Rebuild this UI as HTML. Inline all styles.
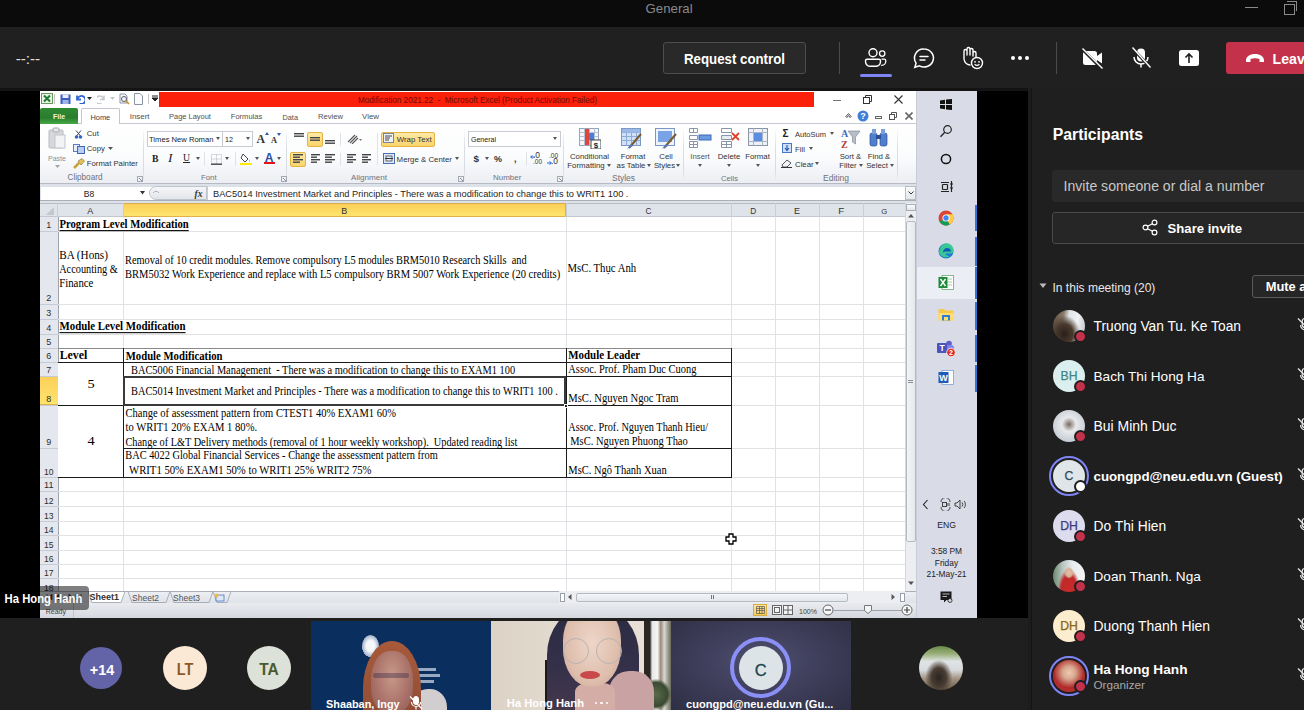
<!DOCTYPE html><html><head><meta charset="utf-8"><style>
*{margin:0;padding:0;box-sizing:border-box}
html,body{width:1304px;height:710px;overflow:hidden;background:#000;font-family:"Liberation Sans",sans-serif}
.a{position:absolute}
.t{white-space:pre;line-height:1}
</style></head><body>
<div class="a" style="left:0px;top:0px;width:1304px;height:27px;background:#0b0b0b"></div>
<div class="a t" style="left:645.6px;top:2.22px;font-family:'Liberation Sans';font-weight:normal;font-size:13.21px;color:#8a8a8a">General</div>
<div class="a" style="left:1245px;top:7px;width:13px;height:1px;background:#8a8a8a"></div>
<div class="a" style="left:1284px;top:4px;width:11px;height:11px;border:1px solid #8a8a8a"></div>
<div class="a" style="left:1287px;top:1px;width:10px;height:10px;border-top:1px solid #8a8a8a;border-right:1px solid #8a8a8a"></div>
<div class="a" style="left:0px;top:27px;width:1304px;height:61px;background:#202020"></div>
<div class="a t" style="left:15.7px;top:50.62px;font-family:'Liberation Sans';font-weight:normal;font-size:15.22px;color:#e0e0e0">--:--</div>
<div class="a" style="left:663px;top:42px;width:143px;height:32px;border:1px solid #4d4d4d;border-radius:3px;background:#292929"></div>
<div class="a t" style="left:684px;top:52.57px;font-family:'Liberation Sans';font-weight:bold;font-size:13.27px;transform:scaleY(1.138);transform-origin:0 11.23px;color:#fff">Request control</div>
<div class="a" style="left:839px;top:42px;width:1px;height:32px;background:#4b4b4b"></div>
<div class="a" style="left:1056px;top:42px;width:1px;height:32px;background:#4b4b4b"></div>
<svg class="a" style="left:864px;top:46px;" width="26" height="24" viewBox="0 0 26 24"><circle cx="9" cy="6.8" r="4" fill="none" stroke="#fff" stroke-width="1.4"/><path d="M3 13.2 h12 a1.5 1.5 0 0 1 1.5 1.5 v0.8 a4.8 4.8 0 0 1 -4.8 4.8 h-5.4 a4.8 4.8 0 0 1 -4.8 -4.8 v-0.8 a1.5 1.5 0 0 1 1.5 -1.5z" fill="none" stroke="#fff" stroke-width="1.4"/><circle cx="18.2" cy="7.6" r="2.7" fill="none" stroke="#fff" stroke-width="1.3"/><path d="M17.5 13.2 h2.8 a1.5 1.5 0 0 1 1.5 1.5 v0.6 a4 4 0 0 1 -4 4 h-0.6" fill="none" stroke="#fff" stroke-width="1.3"/></svg>
<div class="a" style="left:860px;top:74px;width:32px;height:3px;background:#7f85f5;border-radius:2px"></div>
<svg class="a" style="left:912px;top:47px;" width="24" height="22" viewBox="0 0 24 22"><path d="M12 2 a9.5 9 0 1 1 -4.6 16.9 l-4.6 1.4 1.3-4.2 a9 9 0 0 1 7.9-14.1z" fill="none" stroke="#fff" stroke-width="1.5"/><path d="M8 9.5h8M8 13h5" stroke="#fff" stroke-width="1.5" stroke-linecap="round"/></svg>
<svg class="a" style="left:960px;top:46px;" width="24" height="24" viewBox="0 0 24 24"><path d="M4 13 V5 a1.5 1.5 0 0 1 3 0 V9 M7 9 V3 a1.5 1.5 0 0 1 3 0 V9 M10 9 V4 a1.5 1.5 0 0 1 3 0 v6 M13 10 V7 a1.5 1.5 0 0 1 3 0 v4 M4 13 a7 7 0 0 0 6 6" fill="none" stroke="#fff" stroke-width="1.4" stroke-linecap="round"/><circle cx="17" cy="17" r="5.5" fill="#202020" stroke="#fff" stroke-width="1.4"/><circle cx="15" cy="15.8" r="0.9" fill="#fff"/><circle cx="19" cy="15.8" r="0.9" fill="#fff"/><path d="M14.6 18.3 q2.4 2.2 4.8 0" fill="none" stroke="#fff" stroke-width="1.2"/></svg>
<div class="a" style="left:1011px;top:56px;width:4px;height:4px;background:#fff;border-radius:50%"></div>
<div class="a" style="left:1018px;top:56px;width:4px;height:4px;background:#fff;border-radius:50%"></div>
<div class="a" style="left:1025px;top:56px;width:4px;height:4px;background:#fff;border-radius:50%"></div>
<svg class="a" style="left:1080px;top:46px;" width="26" height="24" viewBox="0 0 26 24"><rect x="3" y="5" width="14" height="14" rx="2.5" fill="#fff"/><path d="M17 10 l5-3.5 v11 l-5-3.5z" fill="#fff"/><path d="M2 3 L22 23" stroke="#202020" stroke-width="3"/><path d="M2.5 2.5 L22.5 22.5" stroke="#fff" stroke-width="1.4"/></svg>
<svg class="a" style="left:1129px;top:46px;" width="24" height="24" viewBox="0 0 24 24"><rect x="8" y="2.5" width="8" height="13" rx="4" fill="#fff"/><path d="M5 11 a7 7 0 0 0 14 0" fill="none" stroke="#fff" stroke-width="1.5"/><path d="M12 18 v3.5" stroke="#fff" stroke-width="1.5"/><path d="M3 2 L21 21" stroke="#202020" stroke-width="3"/><path d="M3.5 1.5 L21.5 21.5" stroke="#fff" stroke-width="1.4"/></svg>
<svg class="a" style="left:1178px;top:48px;" width="22" height="20" viewBox="0 0 22 20"><rect x="1" y="2" width="20" height="16" rx="2.5" fill="#fff"/><path d="M11 15 V6 M7.5 9.5 L11 6 L14.5 9.5" fill="none" stroke="#202020" stroke-width="1.6"/></svg>
<div class="a" style="left:1226px;top:42px;width:90px;height:32px;background:#c4314b;border-radius:3px"></div>
<svg class="a" style="left:1244px;top:50px;" width="22" height="16" viewBox="0 0 22 16"><path d="M2 10.5 c0-4 4-6.5 9-6.5 s9 2.5 9 6.5 v1.5 h-4.5 v-3 c-2.5-1 -6.5-1 -9 0 v3 H2z" fill="#fff"/></svg>
<div class="a t" style="left:1272.6px;top:51.86px;font-family:'Liberation Sans';font-weight:bold;font-size:14.11px;transform:scaleY(1.0987);transform-origin:0 11.94px;color:#fff">Leave</div>
<div class="a" style="left:0px;top:88px;width:1028px;height:530px;background:#000"></div>
<div class="a" style="left:0px;top:88px;width:1028px;height:3px;background:#141414"></div>
<div class="a" style="left:1028px;top:88px;width:276px;height:622px;background:#1f1f1f"></div>
<div class="a" style="left:1028px;top:88px;width:3px;height:622px;background:#1c1c1c"></div>
<div class="a" style="left:1031px;top:88px;width:1px;height:622px;background:#141414"></div>
<div class="a" style="left:0px;top:618px;width:1028px;height:92px;background:#1f1f1f"></div>
<div class="a" style="left:40px;top:91px;width:877px;height:527px;background:#fff"></div>
<svg class="a" style="left:41px;top:93px;" width="12" height="11" viewBox="0 0 12 11"><rect x="0.5" y="0.5" width="11" height="10" fill="#e9f3e6" stroke="#6a9a60"/><path d="M3 2.5 L9 8.5 M9 2.5 L3 8.5" stroke="#1e7b32" stroke-width="2"/></svg>
<div class="a" style="left:54px;top:94px;width:1px;height:10px;background:#c8c8c8"></div>
<svg class="a" style="left:60px;top:94px;" width="11" height="10" viewBox="0 0 11 10"><rect x="0.5" y="0.5" width="10" height="9.5" fill="#3d5fc0"/><rect x="2.5" y="0.5" width="6" height="3.5" fill="#e8eefc"/><rect x="2.5" y="6" width="6" height="4" fill="#9fb3e6"/></svg>
<svg class="a" style="left:75px;top:94px;" width="10" height="10" viewBox="0 0 10 10"><path d="M2 1.5 V5.5 H6" fill="none" stroke="#2f64d0" stroke-width="1.8"/><path d="M2.5 5 A4 4 0 1 1 4.5 9.5" fill="none" stroke="#2f64d0" stroke-width="1.8"/></svg>
<svg class="a" style="left:87px;top:97px;" width="5" height="4" viewBox="0 0 5 4"><path d="M0 0 H5 L2.5 3z" fill="#222"/></svg>
<svg class="a" style="left:97px;top:94px;" width="9" height="10" viewBox="0 0 9 10"><path d="M7 1.5 V5.5 H3" fill="none" stroke="#c2c6cc" stroke-width="1.5"/><path d="M6.5 5 A4 4 0 1 0 4.5 9.5" fill="none" stroke="#c2c6cc" stroke-width="1.5"/></svg>
<svg class="a" style="left:110px;top:97px;" width="5" height="4" viewBox="0 0 5 4"><path d="M0 0 H5 L2.5 3z" fill="#c2c6cc"/></svg>
<svg class="a" style="left:119px;top:93px;" width="11" height="12" viewBox="0 0 11 12"><path d="M1 1 H6 L8 3 V10 H1z" fill="#f4f6fa" stroke="#8d95a4"/><circle cx="5" cy="6" r="2.5" fill="none" stroke="#57606e" stroke-width="1"/><path d="M7 8 L10 11" stroke="#d08a2a" stroke-width="1.6"/></svg>
<svg class="a" style="left:134px;top:93px;" width="9" height="12" viewBox="0 0 9 12"><path d="M0.5 0.5 H6 L8.5 3 V11.5 H0.5z" fill="#fafbfd" stroke="#8d95a4"/></svg>
<div class="a" style="left:148px;top:94px;width:1px;height:10px;background:#c8c8c8"></div>
<svg class="a" style="left:152px;top:95px;" width="6" height="8" viewBox="0 0 6 8"><path d="M0 1 H6 M0 3 H6 L3 6z" stroke="#222" fill="#222" stroke-width="1"/></svg>
<div class="a" style="left:159px;top:92px;width:655px;height:15px;background:#fb2009"></div>
<div class="a t" style="left:358px;top:96.82px;font-family:'Liberation Sans';font-weight:normal;font-size:8.13px;color:#6d0b05">Modification 2021.22  -  Microsoft Excel (Product Activation Failed)</div>
<div class="a" style="left:833px;top:100px;width:8px;height:1px;background:#777"></div>
<svg class="a" style="left:863px;top:95px;" width="9" height="9" viewBox="0 0 9 9"><rect x="0.5" y="2.5" width="6" height="6" fill="none" stroke="#333"/><path d="M2.5 2.5 V0.5 H8.5 V6.5 H6.5" fill="none" stroke="#333"/></svg>
<svg class="a" style="left:894px;top:95px;" width="9" height="9" viewBox="0 0 9 9"><path d="M0.5 0.5 L8.5 8.5 M8.5 0.5 L0.5 8.5" stroke="#333" stroke-width="1.1"/></svg>
<div class="a" style="left:40px;top:123px;width:877px;height:1px;background:#c6cad1"></div>
<div class="a" style="left:40px;top:108px;width:38px;height:16.2px;background:linear-gradient(#2f8a34,#2a7d2e 60%,#45a845);border-radius:2px 2px 0 0"></div>
<div class="a t" style="left:53px;top:113.9px;font-family:'Liberation Sans';font-weight:bold;font-size:6.97px;color:#eaf6e8">File</div>
<div class="a" style="left:81px;top:108px;width:39px;height:16px;background:#fff;border:1px solid #c3c7cf;border-bottom:none;border-radius:2px 2px 0 0"></div>
<div class="a t" style="left:90.5px;top:113.55px;font-family:'Liberation Sans';font-weight:normal;font-size:7.39px;color:#3c3c3c">Home</div>
<div class="a t" style="left:129.7px;top:113.06px;font-family:'Liberation Sans';font-weight:normal;font-size:7.96px;color:#505050">Insert</div>
<div class="a t" style="left:169px;top:113.47px;font-family:'Liberation Sans';font-weight:normal;font-size:7.48px;color:#505050">Page Layout</div>
<div class="a t" style="left:230.8px;top:113.4px;font-family:'Liberation Sans';font-weight:normal;font-size:7.56px;color:#505050">Formulas</div>
<div class="a t" style="left:282.5px;top:113.59px;font-family:'Liberation Sans';font-weight:normal;font-size:7.34px;color:#505050">Data</div>
<div class="a t" style="left:318px;top:113.35px;font-family:'Liberation Sans';font-weight:normal;font-size:7.62px;color:#505050">Review</div>
<div class="a t" style="left:362px;top:113.11px;font-family:'Liberation Sans';font-weight:normal;font-size:7.91px;color:#505050">View</div>
<svg class="a" style="left:845px;top:112px;" width="7" height="6" viewBox="0 0 7 6"><path d="M0.5 5 L3.5 1.5 L6.5 5 M1.5 6 L3.5 3.5 L5.5 6" fill="none" stroke="#555"/></svg>
<svg class="a" style="left:857px;top:110px;" width="12" height="12" viewBox="0 0 12 12"><circle cx="6" cy="6" r="5.5" fill="#3f7fd6"/><text x="6" y="9.3" font-size="9" font-weight="bold" fill="#fff" text-anchor="middle" font-family="Liberation Sans">?</text></svg>
<div class="a" style="left:875px;top:116px;width:7px;height:3px;border:1px solid #666"></div>
<svg class="a" style="left:889px;top:112px;" width="8" height="8" viewBox="0 0 8 8"><rect x="0.5" y="2.5" width="5" height="5" fill="none" stroke="#555"/><path d="M2.5 2.5V0.5H7.5V5.5H5.5" fill="none" stroke="#555"/></svg>
<svg class="a" style="left:905px;top:112px;" width="8" height="8" viewBox="0 0 8 8"><path d="M0.5 0.5 L7.5 7.5 M7.5 0.5 L0.5 7.5" stroke="#666" stroke-width="1.6"/></svg>
<div class="a" style="left:40px;top:124px;width:877px;height:59px;background:linear-gradient(#ffffff 0%,#fbfcfd 55%,#eceef3 100%)"></div>
<div class="a" style="left:40px;top:183px;width:877px;height:1px;background:#b6bac2"></div>
<div class="a" style="left:143px;top:127px;width:1px;height:54px;background:linear-gradient(#fff,#d9dce2 40%,#d9dce2 80%,#eceef2)"></div>
<div class="a" style="left:286px;top:127px;width:1px;height:54px;background:linear-gradient(#fff,#d9dce2 40%,#d9dce2 80%,#eceef2)"></div>
<div class="a" style="left:464px;top:127px;width:1px;height:54px;background:linear-gradient(#fff,#d9dce2 40%,#d9dce2 80%,#eceef2)"></div>
<div class="a" style="left:563px;top:127px;width:1px;height:54px;background:linear-gradient(#fff,#d9dce2 40%,#d9dce2 80%,#eceef2)"></div>
<div class="a" style="left:683px;top:127px;width:1px;height:54px;background:linear-gradient(#fff,#d9dce2 40%,#d9dce2 80%,#eceef2)"></div>
<div class="a" style="left:775px;top:127px;width:1px;height:54px;background:linear-gradient(#fff,#d9dce2 40%,#d9dce2 80%,#eceef2)"></div>
<div class="a" style="left:897px;top:127px;width:1px;height:54px;background:linear-gradient(#fff,#d9dce2 40%,#d9dce2 80%,#eceef2)"></div>
<div class="a t" style="left:67.5px;top:174.08px;font-family:'Liberation Sans';font-weight:normal;font-size:8.18px;color:#6f737b">Clipboard</div>
<div class="a t" style="left:201px;top:174.4px;font-family:'Liberation Sans';font-weight:normal;font-size:7.80px;color:#6f737b">Font</div>
<div class="a t" style="left:351px;top:174.15px;font-family:'Liberation Sans';font-weight:normal;font-size:8.10px;color:#6f737b">Alignment</div>
<div class="a t" style="left:493px;top:174.24px;font-family:'Liberation Sans';font-weight:normal;font-size:7.98px;color:#6f737b">Number</div>
<div class="a t" style="left:612px;top:173.85px;font-family:'Liberation Sans';font-weight:normal;font-size:8.45px;color:#6f737b">Styles</div>
<div class="a t" style="left:721px;top:174.53px;font-family:'Liberation Sans';font-weight:normal;font-size:7.65px;color:#6f737b">Cells</div>
<div class="a t" style="left:823px;top:173.8px;font-family:'Liberation Sans';font-weight:normal;font-size:8.50px;color:#6f737b">Editing</div>
<svg class="a" style="left:137px;top:176px;" width="6" height="6" viewBox="0 0 6 6"><rect x="0.5" y="0.5" width="5" height="5" fill="none" stroke="#a4a8b0"/><path d="M2 2 L5 5" stroke="#8a8e96"/></svg>
<svg class="a" style="left:281px;top:176px;" width="6" height="6" viewBox="0 0 6 6"><rect x="0.5" y="0.5" width="5" height="5" fill="none" stroke="#a4a8b0"/><path d="M2 2 L5 5" stroke="#8a8e96"/></svg>
<svg class="a" style="left:458px;top:176px;" width="6" height="6" viewBox="0 0 6 6"><rect x="0.5" y="0.5" width="5" height="5" fill="none" stroke="#a4a8b0"/><path d="M2 2 L5 5" stroke="#8a8e96"/></svg>
<svg class="a" style="left:557px;top:176px;" width="6" height="6" viewBox="0 0 6 6"><rect x="0.5" y="0.5" width="5" height="5" fill="none" stroke="#a4a8b0"/><path d="M2 2 L5 5" stroke="#8a8e96"/></svg>
<svg class="a" style="left:48px;top:127px;" width="18" height="22" viewBox="0 0 18 22"><rect x="1" y="3" width="14" height="18" rx="1" fill="#d5d7db" stroke="#b9bcc2"/><rect x="5" y="1" width="6" height="4" rx="1" fill="#e6e7ea" stroke="#a8abb1"/><rect x="7" y="8" width="10" height="13" fill="#f2f3f5" stroke="#c2c5ca"/></svg>
<div class="a t" style="left:48px;top:155.04px;font-family:'Liberation Sans';font-weight:normal;font-size:7.04px;color:#8c9098">Paste</div>
<svg class="a" style="left:55px;top:165px;" width="5" height="3" viewBox="0 0 5 3"><path d="M0 0H5L2.5 3z" fill="#a0a4aa"/></svg>
<svg class="a" style="left:74px;top:130px;" width="9" height="9" viewBox="0 0 9 9"><path d="M2 0.5 L6.5 6 M7 0.5 L2.5 6" stroke="#445" stroke-width="1"/><circle cx="2.5" cy="7" r="1.8" fill="#3468c8"/><circle cx="6.5" cy="7" r="1.8" fill="#3468c8"/></svg>
<div class="a t" style="left:86.8px;top:130.47px;font-family:'Liberation Sans';font-weight:normal;font-size:7.71px;color:#333">Cut</div>
<svg class="a" style="left:73px;top:144px;" width="12" height="10" viewBox="0 0 12 10"><rect x="0.5" y="0.5" width="6" height="7" fill="#e8eefb" stroke="#5b7cc4"/><rect x="4.5" y="2.5" width="7" height="7" fill="#b8cdf2" stroke="#3f66bd"/></svg>
<div class="a t" style="left:86.8px;top:145.47px;font-family:'Liberation Sans';font-weight:normal;font-size:7.71px;color:#333">Copy</div>
<svg class="a" style="left:108px;top:147px;" width="5" height="3" viewBox="0 0 5 3"><path d="M0 0H5L2.5 3z" fill="#555"/></svg>
<svg class="a" style="left:73px;top:158px;" width="12" height="11" viewBox="0 0 12 11"><path d="M1 10 L6 5" stroke="#c9a23a" stroke-width="2.5"/><path d="M5 3 L9 0.5 L11.5 3 L8 7z" fill="#e3c25a" stroke="#7a6a3a" stroke-width="0.6"/></svg>
<div class="a t" style="left:86.8px;top:160.45px;font-family:'Liberation Sans';font-weight:normal;font-size:7.74px;color:#333">Format Painter</div>
<div class="a" style="left:147px;top:131px;width:76px;height:16px;background:#fff;border:1px solid #c7cbd2"></div>
<div class="a" style="left:222px;top:131px;width:31px;height:16px;background:#fff;border:1px solid #c7cbd2"></div>
<div class="a t" style="left:149px;top:135.56px;font-family:'Liberation Sans';font-weight:normal;font-size:7.61px;color:#222">Times New Roman</div>
<svg class="a" style="left:216px;top:137px;" width="4" height="3" viewBox="0 0 4 3"><path d="M0 0H4L2 3z" fill="#555"/></svg>
<div class="a t" style="left:225px;top:135.91px;font-family:'Liberation Sans';font-weight:normal;font-size:7.19px;color:#222">12</div>
<svg class="a" style="left:246px;top:137px;" width="4" height="3" viewBox="0 0 4 3"><path d="M0 0H4L2 3z" fill="#555"/></svg>
<div class="a t" style="left:256.5px;top:133.64px;font-family:'Liberation Serif';font-weight:bold;font-size:11.77px;color:#333">A</div>
<svg class="a" style="left:265px;top:132px;" width="4" height="3" viewBox="0 0 4 3"><path d="M0 3H4L2 0z" fill="#2b5cb8"/></svg>
<div class="a t" style="left:271px;top:136.54px;font-family:'Liberation Serif';font-weight:bold;font-size:8.31px;color:#333">A</div>
<svg class="a" style="left:277px;top:133px;" width="4" height="3" viewBox="0 0 4 3"><path d="M0 0H4L2 3z" fill="#2b5cb8"/></svg>
<div class="a t" style="left:152px;top:154.34px;font-family:'Liberation Serif';font-weight:bold;font-size:9.74px;color:#222">B</div>
<div class="a t" style="left:168px;top:151.19px;font-family:'Liberation Serif';font-weight:normal;font-style:italic;font-size:13.51px;color:#222">I</div>
<div class="a t" style="left:183px;top:153.38px;font-family:'Liberation Serif';font-weight:normal;font-size:9.69px;color:#222;text-decoration:underline">U</div>
<svg class="a" style="left:196px;top:157px;" width="4" height="3" viewBox="0 0 4 3"><path d="M0 0H4L2 3z" fill="#555"/></svg>
<div class="a" style="left:204px;top:152px;width:1px;height:14px;background:#dfe2e7"></div>
<svg class="a" style="left:211px;top:154px;" width="11" height="11" viewBox="0 0 11 11"><rect x="0.5" y="0.5" width="10" height="9" fill="none" stroke="#b0b5bd" stroke-dasharray="1 1"/><path d="M5.5 0.5V9.5M0.5 5H10.5" stroke="#b0b5bd" stroke-dasharray="1 1"/><path d="M0 10.2H11" stroke="#222" stroke-width="1.1"/></svg>
<svg class="a" style="left:225px;top:157px;" width="4" height="3" viewBox="0 0 4 3"><path d="M0 0H4L2 3z" fill="#555"/></svg>
<div class="a" style="left:235px;top:152px;width:1px;height:14px;background:#dfe2e7"></div>
<svg class="a" style="left:240px;top:152px;" width="12" height="13" viewBox="0 0 12 13"><path d="M3 2 L8 7 L5 10 L1 6z" fill="#fff" stroke="#445"/><path d="M9 7 q1.5 2 0 3" fill="#6aa0e0"/><rect x="0" y="11" width="12" height="2" fill="#ffea00"/></svg>
<svg class="a" style="left:255px;top:157px;" width="4" height="3" viewBox="0 0 4 3"><path d="M0 0H4L2 3z" fill="#555"/></svg>
<div class="a t" style="left:264.8px;top:151.5px;font-family:'Liberation Sans';font-weight:bold;font-size:12.05px;color:#2a4fa8">A</div>
<div class="a" style="left:263.5px;top:162px;width:11px;height:2.2px;background:#e0161a"></div>
<svg class="a" style="left:277px;top:157px;" width="4" height="3" viewBox="0 0 4 3"><path d="M0 0H4L2 3z" fill="#555"/></svg>
<svg class="a" style="left:294px;top:133px;" width="12" height="7.0" viewBox="0 0 12 7.0"><rect x="0" y="0.0" width="10" height="1.4" fill="#444"/><rect x="0" y="2.5" width="10" height="1.4" fill="#444"/></svg>
<div class="a" style="left:306.5px;top:131.5px;width:16px;height:15px;background:linear-gradient(#fde9a6,#fbd46c);border:1px solid #e2b543;border-radius:2px"></div>
<svg class="a" style="left:309.5px;top:137px;" width="12" height="7.0" viewBox="0 0 12 7.0"><rect x="0" y="0.0" width="10" height="1.4" fill="#444"/><rect x="0" y="2.5" width="10" height="1.4" fill="#444"/></svg>
<svg class="a" style="left:325px;top:139.5px;" width="12" height="7.0" viewBox="0 0 12 7.0"><rect x="0" y="0.0" width="10" height="1.4" fill="#444"/><rect x="0" y="2.5" width="10" height="1.4" fill="#444"/></svg>
<div class="a" style="left:340px;top:133px;width:1px;height:13px;background:#dfe2e7"></div>
<svg class="a" style="left:347px;top:133px;" width="16" height="11" viewBox="0 0 16 11"><path d="M1 9 L8 2 M3 10 L10 3 M5 11 L11 5" stroke="#555" stroke-width="1.1"/><path d="M12 6 L15 6 L13.5 8z" fill="#777"/></svg>
<div class="a" style="left:377px;top:133px;width:1px;height:32px;background:#dfe2e7"></div>
<div class="a" style="left:381px;top:131.5px;width:54px;height:15px;background:linear-gradient(#fde9a6,#fbd46c);border:1px solid #e2b543;border-radius:2px"></div>
<svg class="a" style="left:383px;top:133px;" width="12" height="11" viewBox="0 0 12 11"><rect x="0.5" y="0.5" width="10" height="9" fill="#eef1f6" stroke="#7a8494"/><path d="M2 3H9M2 5H7M2 7H6" stroke="#444"/></svg>
<div class="a t" style="left:396.7px;top:135.86px;font-family:'Liberation Sans';font-weight:normal;font-size:7.84px;color:#333">Wrap Text</div>
<div class="a" style="left:290px;top:151.5px;width:16px;height:15px;background:linear-gradient(#fde9a6,#fbd46c);border:1px solid #e2b543;border-radius:2px"></div>
<svg class="a" style="left:293px;top:154px;" width="12" height="12.0" viewBox="0 0 12 12.0"><rect x="0" y="0.0" width="10" height="1.4" fill="#444"/><rect x="0" y="2.5" width="7" height="1.4" fill="#444"/><rect x="0" y="5.0" width="10" height="1.4" fill="#444"/><rect x="0" y="7.5" width="7" height="1.4" fill="#444"/></svg>
<svg class="a" style="left:311px;top:154px;" width="12" height="12.0" viewBox="0 0 12 12.0"><rect x="0" y="0.0" width="9" height="1.4" fill="#444"/><rect x="0" y="2.5" width="6" height="1.4" fill="#444"/><rect x="0" y="5.0" width="9" height="1.4" fill="#444"/><rect x="0" y="7.5" width="6" height="1.4" fill="#444"/></svg>
<svg class="a" style="left:325px;top:154px;" width="12" height="12.0" viewBox="0 0 12 12.0"><rect x="0" y="0.0" width="10" height="1.4" fill="#444"/><rect x="0" y="2.5" width="7" height="1.4" fill="#444"/><rect x="0" y="5.0" width="10" height="1.4" fill="#444"/><rect x="0" y="7.5" width="7" height="1.4" fill="#444"/></svg>
<div class="a" style="left:340px;top:153px;width:1px;height:13px;background:#dfe2e7"></div>
<svg class="a" style="left:347px;top:154px;" width="12" height="12.0" viewBox="0 0 12 12.0"><rect x="0" y="0.0" width="9" height="1.4" fill="#444"/><rect x="0" y="2.5" width="6" height="1.4" fill="#444"/><rect x="0" y="5.0" width="9" height="1.4" fill="#444"/><rect x="0" y="7.5" width="6" height="1.4" fill="#444"/></svg>
<svg class="a" style="left:362px;top:154px;" width="12" height="12.0" viewBox="0 0 12 12.0"><rect x="0" y="0.0" width="9" height="1.4" fill="#444"/><rect x="0" y="2.5" width="6" height="1.4" fill="#444"/><rect x="0" y="5.0" width="9" height="1.4" fill="#444"/><rect x="0" y="7.5" width="6" height="1.4" fill="#444"/></svg>
<svg class="a" style="left:383px;top:153px;" width="12" height="11" viewBox="0 0 12 11"><rect x="0.5" y="0.5" width="11" height="10" fill="#dfe8f6" stroke="#4a6fb5"/><path d="M2 5.5H10" stroke="#333"/><rect x="3" y="3" width="6" height="5" fill="none" stroke="#333" stroke-width="0.7"/></svg>
<div class="a t" style="left:396.6px;top:155.86px;font-family:'Liberation Sans';font-weight:normal;font-size:7.85px;color:#333">Merge &amp; Center</div>
<svg class="a" style="left:455px;top:157px;" width="4" height="3" viewBox="0 0 4 3"><path d="M0 0H4L2 3z" fill="#555"/></svg>
<div class="a" style="left:468px;top:131px;width:93px;height:16px;background:#fff;border:1px solid #c7cbd2"></div>
<div class="a t" style="left:471px;top:136.05px;font-family:'Liberation Sans';font-weight:normal;font-size:7.03px;color:#222">General</div>
<svg class="a" style="left:553px;top:137px;" width="4" height="3" viewBox="0 0 4 3"><path d="M0 0H4L2 3z" fill="#555"/></svg>
<div class="a t" style="left:473.5px;top:154.13px;font-family:'Liberation Sans';font-weight:bold;font-size:9.89px;color:#333">$</div>
<svg class="a" style="left:485px;top:157px;" width="4" height="3" viewBox="0 0 4 3"><path d="M0 0H4L2 3z" fill="#555"/></svg>
<div class="a t" style="left:494px;top:154.88px;font-family:'Liberation Sans';font-weight:bold;font-size:9.00px;color:#333">%</div>
<div class="a t" style="left:514px;top:154.89px;font-family:'Liberation Sans';font-weight:bold;font-size:8.99px;color:#333">,</div>
<div class="a" style="left:526px;top:152px;width:1px;height:14px;background:#dfe2e7"></div>
<div class="a t" style="left:533px;top:151.4px;font-family:'Liberation Sans';font-weight:normal;font-size:8.39px;color:#333">.0</div>
<div class="a t" style="left:533px;top:159.02px;font-family:'Liberation Sans';font-weight:normal;font-size:6.47px;color:#333">.00</div>
<div class="a t" style="left:549px;top:153.02px;font-family:'Liberation Sans';font-weight:normal;font-size:6.47px;color:#333">.00</div>
<div class="a t" style="left:551px;top:157.4px;font-family:'Liberation Sans';font-weight:normal;font-size:8.39px;color:#333">.0</div>
<svg class="a" style="left:530px;top:155px;" width="5" height="4" viewBox="0 0 5 4"><path d="M5 2H1M2.5 0.5L0.5 2L2.5 3.5" stroke="#2b6ad0" fill="none"/></svg>
<svg class="a" style="left:547px;top:161px;" width="5" height="4" viewBox="0 0 5 4"><path d="M0 2H4M2.5 0.5L4.5 2L2.5 3.5" stroke="#2b6ad0" fill="none"/></svg>
<svg class="a" style="left:579px;top:128px;" width="22" height="21" viewBox="0 0 22 21"><rect x="0.5" y="0.5" width="19" height="17" fill="#f5f7fb" stroke="#94a2bb"/><path d="M0.5 4.5H19.5M0.5 8.5H19.5M0.5 12.5H19.5M5.5 0.5V17.5M10.5 0.5V17.5M15.5 0.5V17.5" stroke="#b4c0d4"/><rect x="6" y="1" width="4" height="16" fill="#e0453a"/><rect x="10" y="5" width="5" height="7" fill="#4b7fd6"/><rect x="12" y="12" width="10" height="9" fill="#fff" stroke="#444"/><text x="17" y="20" font-size="8" font-family="Liberation Sans" font-weight="bold" fill="#222" text-anchor="middle">$</text></svg>
<div class="a t" style="left:529.5px;width:120px;text-align:center;top:153.4px;font-family:'Liberation Sans';font-size:7.8px;font-weight:normal;color:#333;">Conditional</div>
<div class="a t" style="left:526px;width:120px;text-align:center;top:162.4px;font-family:'Liberation Sans';font-size:7.8px;font-weight:normal;color:#333;">Formatting</div>
<svg class="a" style="left:607px;top:164px;" width="4" height="3" viewBox="0 0 4 3"><path d="M0 0H4L2 3z" fill="#555"/></svg>
<svg class="a" style="left:621px;top:128px;" width="22" height="21" viewBox="0 0 22 21"><rect x="0.5" y="0.5" width="19" height="17" fill="#cfe0f7" stroke="#7c97c4"/><path d="M0.5 4.5H19.5M0.5 8.5H19.5M0.5 12.5H19.5M5.5 0.5V17.5M10.5 0.5V17.5M15.5 0.5V17.5" stroke="#8eaad8"/><rect x="1" y="1" width="18" height="3.5" fill="#9ab8e8"/><path d="M8 20 L20 6" stroke="#7a5a2a" stroke-width="2"/><path d="M6 21 L10 16 L12 18z" fill="#4a7fd0"/></svg>
<div class="a t" style="left:573px;width:120px;text-align:center;top:153.4px;font-family:'Liberation Sans';font-size:7.8px;font-weight:normal;color:#333;">Format</div>
<div class="a t" style="left:571px;width:120px;text-align:center;top:162.4px;font-family:'Liberation Sans';font-size:7.8px;font-weight:normal;color:#333;">as Table</div>
<svg class="a" style="left:647px;top:164px;" width="4" height="3" viewBox="0 0 4 3"><path d="M0 0H4L2 3z" fill="#555"/></svg>
<svg class="a" style="left:655px;top:128px;" width="22" height="21" viewBox="0 0 22 21"><rect x="0.5" y="0.5" width="19" height="17" fill="#eef3fb" stroke="#7c97c4"/><rect x="3" y="3" width="14" height="11" fill="#7aa3e6"/><path d="M9 20 L21 6" stroke="#7a5a2a" stroke-width="2"/><path d="M7 21 L11 16 L13 18z" fill="#4a7fd0"/></svg>
<div class="a t" style="left:606px;width:120px;text-align:center;top:153.4px;font-family:'Liberation Sans';font-size:7.8px;font-weight:normal;color:#333;">Cell</div>
<div class="a t" style="left:604.5px;width:120px;text-align:center;top:162.4px;font-family:'Liberation Sans';font-size:7.8px;font-weight:normal;color:#333;">Styles</div>
<svg class="a" style="left:676px;top:164px;" width="4" height="3" viewBox="0 0 4 3"><path d="M0 0H4L2 3z" fill="#555"/></svg>
<svg class="a" style="left:689px;top:128px;" width="23" height="20" viewBox="0 0 23 20"><path d="M0.5 0.5H8.5V4.5H0.5z M0.5 13.5H8.5V19.5H0.5z M0.5 16.5H8.5 M4.5 13.5V19.5 M4.5 0.5V4.5" fill="#fff" stroke="#8a96a8"/><rect x="10" y="7" width="12" height="5" fill="#6a9be0" stroke="#3d6bb5"/><path d="M9 9.5 H3 M5 7.5 L3 9.5 L5 11.5" stroke="#3d6bb5" fill="none"/><path d="M0.5 7.5H8.5V11.5H0.5z" fill="#fff" stroke="#8a96a8"/></svg>
<div class="a t" style="left:640px;width:120px;text-align:center;top:153.4px;font-family:'Liberation Sans';font-size:7.8px;font-weight:normal;color:#555;">Insert</div>
<svg class="a" style="left:698px;top:164px;" width="4" height="3" viewBox="0 0 4 3"><path d="M0 0H4L2 3z" fill="#555"/></svg>
<svg class="a" style="left:721px;top:128px;" width="20" height="20" viewBox="0 0 20 20"><path d="M0.5 0.5H10.5V4.5H0.5z M0.5 13.5H10.5V19.5H0.5z M0.5 16.5H10.5 M5.5 13.5V19.5" fill="#fff" stroke="#8a96a8"/><path d="M0.5 7.5H10.5V11.5H0.5z" fill="#e8ecf2" stroke="#8a96a8"/><path d="M11 5 L18 12 M18 5 L11 12" stroke="#e0402a" stroke-width="1.8"/></svg>
<div class="a t" style="left:669px;width:120px;text-align:center;top:153.4px;font-family:'Liberation Sans';font-size:7.8px;font-weight:normal;color:#333;">Delete</div>
<svg class="a" style="left:727px;top:164px;" width="4" height="3" viewBox="0 0 4 3"><path d="M0 0H4L2 3z" fill="#555"/></svg>
<svg class="a" style="left:748px;top:128px;" width="21" height="20" viewBox="0 0 21 20"><rect x="0.5" y="0.5" width="19" height="17" fill="#eef2f8" stroke="#8a96a8"/><path d="M0.5 4.5H19.5M0.5 13.5H19.5M5.5 0.5V17.5M14.5 0.5V17.5" stroke="#a9b4c4"/><rect x="6" y="5" width="8" height="8" fill="#5a8ee0"/></svg>
<div class="a t" style="left:697.5px;width:120px;text-align:center;top:153.4px;font-family:'Liberation Sans';font-size:7.8px;font-weight:normal;color:#333;">Format</div>
<svg class="a" style="left:756px;top:164px;" width="4" height="3" viewBox="0 0 4 3"><path d="M0 0H4L2 3z" fill="#555"/></svg>
<div class="a t" style="left:782.5px;top:129.04px;font-family:'Liberation Sans';font-weight:bold;font-size:10.00px;color:#222">&#931;</div>
<div class="a t" style="left:795px;top:131.12px;font-family:'Liberation Sans';font-weight:normal;font-size:7.54px;color:#333">AutoSum</div>
<svg class="a" style="left:830px;top:132px;" width="4" height="3" viewBox="0 0 4 3"><path d="M0 0H4L2 3z" fill="#555"/></svg>
<svg class="a" style="left:782px;top:143px;" width="10" height="10" viewBox="0 0 10 10"><rect x="0.5" y="0.5" width="9" height="9" fill="#cfe0f7" stroke="#4a78c8"/><path d="M5 2V7M3 5L5 7.5L7 5" stroke="#2a5ab8" fill="none" stroke-width="1.2"/></svg>
<div class="a t" style="left:795px;top:145.9px;font-family:'Liberation Sans';font-size:7.8px;font-weight:normal;color:#333;">Fill</div>
<svg class="a" style="left:809px;top:147px;" width="4" height="3" viewBox="0 0 4 3"><path d="M0 0H4L2 3z" fill="#555"/></svg>
<svg class="a" style="left:781px;top:158px;" width="12" height="10" viewBox="0 0 12 10"><path d="M1 7 L6 2 L10 5 L6 9 H2z" fill="#f2f4f8" stroke="#555"/><path d="M0 9.5H11" stroke="#333"/></svg>
<div class="a t" style="left:795px;top:160.9px;font-family:'Liberation Sans';font-size:7.8px;font-weight:normal;color:#333;">Clear</div>
<svg class="a" style="left:815px;top:162px;" width="4" height="3" viewBox="0 0 4 3"><path d="M0 0H4L2 3z" fill="#555"/></svg>
<svg class="a" style="left:840px;top:128px;" width="21" height="21" viewBox="0 0 21 21"><text x="1" y="9" font-size="10" font-weight="bold" font-family="Liberation Serif" fill="#3a6bc8">A</text><text x="1" y="20" font-size="10" font-weight="bold" font-family="Liberation Serif" fill="#b04030">Z</text><path d="M8 3 H20 L15.5 9 V16 L12.5 14 V9z" fill="#b8bec8" stroke="#7a808a" stroke-width="0.6"/></svg>
<div class="a t" style="left:790.5px;width:120px;text-align:center;top:153.4px;font-family:'Liberation Sans';font-size:7.8px;font-weight:normal;color:#333;">Sort &amp;</div>
<div class="a t" style="left:788px;width:120px;text-align:center;top:162.4px;font-family:'Liberation Sans';font-size:7.8px;font-weight:normal;color:#333;">Filter</div>
<svg class="a" style="left:859px;top:164px;" width="4" height="3" viewBox="0 0 4 3"><path d="M0 0H4L2 3z" fill="#555"/></svg>
<svg class="a" style="left:869px;top:128px;" width="20" height="20" viewBox="0 0 20 20"><rect x="1" y="5" width="7" height="13" rx="2" fill="#4f7fcf" stroke="#2d4f8f" stroke-width="0.7"/><rect x="11" y="5" width="7" height="13" rx="2" fill="#4f7fcf" stroke="#2d4f8f" stroke-width="0.7"/><rect x="3" y="1" width="4" height="5" fill="#7aa0e0"/><rect x="12" y="1" width="4" height="5" fill="#7aa0e0"/><rect x="7" y="7" width="5" height="4" fill="#2d4f8f"/></svg>
<div class="a t" style="left:819px;width:120px;text-align:center;top:153.4px;font-family:'Liberation Sans';font-size:7.8px;font-weight:normal;color:#333;">Find &amp;</div>
<div class="a t" style="left:817px;width:120px;text-align:center;top:162.4px;font-family:'Liberation Sans';font-size:7.8px;font-weight:normal;color:#333;">Select</div>
<svg class="a" style="left:890px;top:164px;" width="4" height="3" viewBox="0 0 4 3"><path d="M0 0H4L2 3z" fill="#555"/></svg>
<div class="a" style="left:40px;top:184px;width:877px;height:19px;background:#dde1e8"></div>
<div class="a" style="left:41px;top:186.5px;width:864px;height:13.5px;background:#fff"></div>
<div class="a" style="left:40px;top:200px;width:877px;height:1px;background:#a9aeb7"></div>
<div class="a" style="left:40px;top:202.5px;width:877px;height:1px;background:#c0c4cb"></div>
<div class="a t" style="left:83.7px;top:190.03px;font-family:'Liberation Sans';font-weight:normal;font-size:8.58px;color:#222">B8</div>
<svg class="a" style="left:140px;top:191px;" width="5" height="4" viewBox="0 0 5 4"><path d="M0 0H5L2.5 3.5z" fill="#333"/></svg>
<div class="a" style="left:149px;top:186px;width:58px;height:14px;background:linear-gradient(#f5f6f8,#e2e5ea);border:1px solid #bfc4cc;border-radius:7px 0 0 7px"></div>
<svg class="a" style="left:152px;top:188px;" width="8" height="6" viewBox="0 0 8 6"><path d="M1 5 A3.5 3.5 0 0 1 7 5" fill="none" stroke="#b0b4bb"/></svg>
<div class="a t" style="left:194.5px;top:189.46px;font-family:'Liberation Serif';font-weight:bold;font-style:italic;font-size:9.60px;color:#333">fx</div>
<div class="a" style="left:207px;top:186px;width:1px;height:14px;background:#c8ccd3"></div>
<div class="a t" style="left:213px;top:189.65px;font-family:'Liberation Sans';font-weight:normal;font-size:9.28px;color:#1e1e1e">BAC5014 Investment Market and Principles - There was a modification to change this to WRIT1 100 .</div>
<div class="a" style="left:905px;top:186px;width:11px;height:14px;background:linear-gradient(#fafbfc,#e3e6eb);border:1px solid #b9bec6"></div>
<svg class="a" style="left:908px;top:191px;" width="6" height="4" viewBox="0 0 6 4"><path d="M0.5 0.5L3 3L5.5 0.5" fill="none" stroke="#333"/></svg>
<div class="a" style="left:40px;top:203px;width:865px;height:14px;background:#dfe3ea"></div>
<div class="a" style="left:40px;top:203px;width:865px;height:1px;background:#b7bbc3"></div>
<div class="a" style="left:40px;top:216.2px;width:865px;height:1px;background:#c3c7cf"></div>
<div class="a" style="left:123px;top:203px;width:442.5px;height:14px;background:linear-gradient(#fccf58,#fde46e);border-right:1px solid #e0b24a;border-bottom:1px solid #e0b24a;border-top:1px solid #d8ad48"></div>
<div class="a" style="left:123px;top:203px;width:1px;height:14px;background:#c9cdd4"></div>
<div class="a" style="left:565.5px;top:203px;width:1px;height:14px;background:#c9cdd4"></div>
<div class="a" style="left:731px;top:203px;width:1px;height:14px;background:#c9cdd4"></div>
<div class="a" style="left:775px;top:203px;width:1px;height:14px;background:#c9cdd4"></div>
<div class="a" style="left:819px;top:203px;width:1px;height:14px;background:#c9cdd4"></div>
<div class="a" style="left:863px;top:203px;width:1px;height:14px;background:#c9cdd4"></div>
<div class="a" style="left:905px;top:203px;width:1px;height:14px;background:#c9cdd4"></div>
<div class="a" style="left:57px;top:203px;width:1px;height:14px;background:#c9cdd4"></div>
<svg class="a" style="left:45px;top:206px;" width="10" height="10" viewBox="0 0 10 10"><path d="M9 1 V9 H1z" fill="#c3c7ce"/></svg>
<div class="a t" style="left:87.25px;top:206.89px;font-family:'Liberation Sans';font-weight:normal;font-size:9.00px;color:#333">A</div>
<div class="a t" style="left:341.25px;top:206.89px;font-family:'Liberation Sans';font-weight:normal;font-size:9.00px;color:#333">B</div>
<div class="a t" style="left:645.5px;top:207.47px;font-family:'Liberation Sans';font-weight:normal;font-size:8.31px;color:#333">C</div>
<div class="a t" style="left:750.25px;top:207.47px;font-family:'Liberation Sans';font-weight:normal;font-size:8.31px;color:#333">D</div>
<div class="a t" style="left:794px;top:206.89px;font-family:'Liberation Sans';font-weight:normal;font-size:9.00px;color:#333">E</div>
<div class="a t" style="left:838.25px;top:206.19px;font-family:'Liberation Sans';font-weight:normal;font-size:9.82px;color:#333">F</div>
<div class="a t" style="left:881.25px;top:207.97px;font-family:'Liberation Sans';font-weight:normal;font-size:7.71px;color:#333">G</div>
<div class="a" style="left:40px;top:217px;width:17.5px;height:376px;background:#e4e7ee"></div>
<div class="a" style="left:57.5px;top:217px;width:0.8px;height:376px;background:#9ea4ae"></div>
<div class="a" style="left:40px;top:376px;width:17.5px;height:29px;background:linear-gradient(#fcd05a,#fde36c);border-bottom:1px solid #e0b24a"></div>
<div class="a" style="left:40px;top:231px;width:17.5px;height:1px;background:#c5cad3"></div>
<div class="a" style="left:58px;top:231px;width:847px;height:1px;background:#e0e2e5"></div>
<div class="a" style="left:40px;top:304px;width:17.5px;height:1px;background:#c5cad3"></div>
<div class="a" style="left:58px;top:304px;width:847px;height:1px;background:#e0e2e5"></div>
<div class="a" style="left:40px;top:319px;width:17.5px;height:1px;background:#c5cad3"></div>
<div class="a" style="left:58px;top:319px;width:847px;height:1px;background:#e0e2e5"></div>
<div class="a" style="left:40px;top:334px;width:17.5px;height:1px;background:#c5cad3"></div>
<div class="a" style="left:58px;top:334px;width:847px;height:1px;background:#e0e2e5"></div>
<div class="a" style="left:40px;top:348px;width:17.5px;height:1px;background:#c5cad3"></div>
<div class="a" style="left:58px;top:348px;width:847px;height:1px;background:#e0e2e5"></div>
<div class="a" style="left:40px;top:362px;width:17.5px;height:1px;background:#c5cad3"></div>
<div class="a" style="left:58px;top:362px;width:847px;height:1px;background:#e0e2e5"></div>
<div class="a" style="left:40px;top:376px;width:17.5px;height:1px;background:#c5cad3"></div>
<div class="a" style="left:58px;top:376px;width:847px;height:1px;background:#e0e2e5"></div>
<div class="a" style="left:40px;top:405px;width:17.5px;height:1px;background:#c5cad3"></div>
<div class="a" style="left:58px;top:405px;width:847px;height:1px;background:#e0e2e5"></div>
<div class="a" style="left:40px;top:448px;width:17.5px;height:1px;background:#c5cad3"></div>
<div class="a" style="left:58px;top:448px;width:847px;height:1px;background:#e0e2e5"></div>
<div class="a" style="left:40px;top:477px;width:17.5px;height:1px;background:#c5cad3"></div>
<div class="a" style="left:58px;top:477px;width:847px;height:1px;background:#e0e2e5"></div>
<div class="a" style="left:40px;top:491px;width:17.5px;height:1px;background:#c5cad3"></div>
<div class="a" style="left:58px;top:491px;width:847px;height:1px;background:#e0e2e5"></div>
<div class="a" style="left:40px;top:506px;width:17.5px;height:1px;background:#c5cad3"></div>
<div class="a" style="left:58px;top:506px;width:847px;height:1px;background:#e0e2e5"></div>
<div class="a" style="left:40px;top:521px;width:17.5px;height:1px;background:#c5cad3"></div>
<div class="a" style="left:58px;top:521px;width:847px;height:1px;background:#e0e2e5"></div>
<div class="a" style="left:40px;top:535px;width:17.5px;height:1px;background:#c5cad3"></div>
<div class="a" style="left:58px;top:535px;width:847px;height:1px;background:#e0e2e5"></div>
<div class="a" style="left:40px;top:550px;width:17.5px;height:1px;background:#c5cad3"></div>
<div class="a" style="left:58px;top:550px;width:847px;height:1px;background:#e0e2e5"></div>
<div class="a" style="left:40px;top:564px;width:17.5px;height:1px;background:#c5cad3"></div>
<div class="a" style="left:58px;top:564px;width:847px;height:1px;background:#e0e2e5"></div>
<div class="a" style="left:40px;top:578px;width:17.5px;height:1px;background:#c5cad3"></div>
<div class="a" style="left:58px;top:578px;width:847px;height:1px;background:#e0e2e5"></div>
<div class="a" style="left:40px;top:593px;width:17.5px;height:1px;background:#c5cad3"></div>
<div class="a" style="left:58px;top:593px;width:847px;height:1px;background:#e0e2e5"></div>
<div class="a" style="left:123px;top:217px;width:1px;height:376px;background:#e0e2e5"></div>
<div class="a" style="left:565.5px;top:217px;width:1px;height:376px;background:#e0e2e5"></div>
<div class="a" style="left:731px;top:217px;width:1px;height:376px;background:#e0e2e5"></div>
<div class="a" style="left:775px;top:217px;width:1px;height:376px;background:#e0e2e5"></div>
<div class="a" style="left:819px;top:217px;width:1px;height:376px;background:#e0e2e5"></div>
<div class="a" style="left:863px;top:217px;width:1px;height:376px;background:#e0e2e5"></div>
<div class="a" style="left:905px;top:217px;width:1px;height:376px;background:#e0e2e5"></div>
<div class="a t" style="left:46.25px;top:221.39px;font-family:'Liberation Sans';font-weight:normal;font-size:8.99px;color:#2d2d2d">1</div>
<div class="a t" style="left:46.25px;top:294.39px;font-family:'Liberation Sans';font-weight:normal;font-size:8.99px;color:#2d2d2d">2</div>
<div class="a t" style="left:46.25px;top:309.39px;font-family:'Liberation Sans';font-weight:normal;font-size:8.99px;color:#2d2d2d">3</div>
<div class="a t" style="left:46.25px;top:324.39px;font-family:'Liberation Sans';font-weight:normal;font-size:8.99px;color:#2d2d2d">4</div>
<div class="a t" style="left:46.25px;top:338.39px;font-family:'Liberation Sans';font-weight:normal;font-size:8.99px;color:#2d2d2d">5</div>
<div class="a t" style="left:46.25px;top:352.39px;font-family:'Liberation Sans';font-weight:normal;font-size:8.99px;color:#2d2d2d">6</div>
<div class="a t" style="left:46.25px;top:366.39px;font-family:'Liberation Sans';font-weight:normal;font-size:8.99px;color:#2d2d2d">7</div>
<div class="a t" style="left:46.25px;top:395.39px;font-family:'Liberation Sans';font-weight:normal;font-size:8.99px;color:#2d2d2d">8</div>
<div class="a t" style="left:46.25px;top:438.39px;font-family:'Liberation Sans';font-weight:normal;font-size:8.99px;color:#2d2d2d">9</div>
<div class="a t" style="left:44.0px;top:467.77px;font-family:'Liberation Sans';font-weight:normal;font-size:8.54px;color:#2d2d2d">10</div>
<div class="a t" style="left:44.0px;top:481.25px;font-family:'Liberation Sans';font-weight:normal;font-size:9.15px;color:#2d2d2d">11</div>
<div class="a t" style="left:44.0px;top:496.77px;font-family:'Liberation Sans';font-weight:normal;font-size:8.54px;color:#2d2d2d">12</div>
<div class="a t" style="left:44.0px;top:511.77px;font-family:'Liberation Sans';font-weight:normal;font-size:8.54px;color:#2d2d2d">13</div>
<div class="a t" style="left:44.0px;top:525.77px;font-family:'Liberation Sans';font-weight:normal;font-size:8.54px;color:#2d2d2d">14</div>
<div class="a t" style="left:44.0px;top:540.77px;font-family:'Liberation Sans';font-weight:normal;font-size:8.54px;color:#2d2d2d">15</div>
<div class="a t" style="left:44.0px;top:554.77px;font-family:'Liberation Sans';font-weight:normal;font-size:8.54px;color:#2d2d2d">16</div>
<div class="a t" style="left:44.0px;top:568.77px;font-family:'Liberation Sans';font-weight:normal;font-size:8.54px;color:#2d2d2d">17</div>
<div class="a t" style="left:44.0px;top:583.77px;font-family:'Liberation Sans';font-weight:normal;font-size:8.54px;color:#2d2d2d">18</div>
<div class="a" style="left:58px;top:363px;width:65px;height:42px;background:#fff"></div>
<div class="a" style="left:58px;top:406px;width:65px;height:71px;background:#fff"></div>
<div class="a" style="left:123px;top:217.8px;width:1px;height:13px;background:#fff"></div>
<div class="a" style="left:123px;top:319.8px;width:1px;height:14px;background:#fff"></div>
<div class="a" style="left:58px;top:347.6px;width:673.5px;height:1.2px;background:#8a8a8a"></div>
<div class="a" style="left:58px;top:362px;width:673.5px;height:1px;background:#1a1a1a"></div>
<div class="a" style="left:123px;top:376px;width:608.5px;height:1px;background:#1a1a1a"></div>
<div class="a" style="left:58px;top:405px;width:673.5px;height:1px;background:#1a1a1a"></div>
<div class="a" style="left:123px;top:448px;width:608.5px;height:1px;background:#1a1a1a"></div>
<div class="a" style="left:58px;top:477px;width:673.5px;height:1.2px;background:#1a1a1a"></div>
<div class="a" style="left:123px;top:348px;width:1px;height:130px;background:#1a1a1a"></div>
<div class="a" style="left:565.5px;top:348px;width:1px;height:130px;background:#1a1a1a"></div>
<div class="a" style="left:731px;top:348px;width:1px;height:130px;background:#1a1a1a"></div>
<div class="a" style="left:122.5px;top:375.5px;width:443.5px;height:30.5px;border:2px solid #3a3a3a;background:transparent"></div>
<div class="a" style="left:563.5px;top:403.5px;width:4px;height:4px;background:#222;border:1px solid #fff"></div>
<div class="a t" style="left:59.5px;top:219.78px;font-family:'Liberation Serif';font-weight:bold;font-size:10.65px;transform:scaleY(1.0841);transform-origin:0 8.92px;color:#000;text-decoration:underline;text-underline-offset:1.5px;">Program Level Modification</div>
<div class="a t" style="left:59.2px;top:249.85px;font-family:'Liberation Serif';font-weight:normal;font-size:11.17px;transform:scaleY(1.0344);transform-origin:0 9.35px;color:#000;">BA (Hons)</div>
<div class="a t" style="left:59.2px;top:264.77px;font-family:'Liberation Serif';font-weight:normal;font-size:10.31px;transform:scaleY(1.1203);transform-origin:0 8.63px;color:#000;">Accounting &amp;</div>
<div class="a t" style="left:59.2px;top:278.15px;font-family:'Liberation Serif';font-weight:normal;font-size:10.80px;transform:scaleY(1.0691);transform-origin:0 9.05px;color:#000;">Finance</div>
<div class="a t" style="left:125px;top:256.32px;font-family:'Liberation Serif';font-weight:normal;font-size:10.36px;transform:scaleY(1.1145);transform-origin:0 8.68px;color:#000;">Removal of 10 credit modules. Remove compulsory L5 modules BRM5010 Research Skills  and</div>
<div class="a t" style="left:125px;top:269.97px;font-family:'Liberation Serif';font-weight:normal;font-size:10.54px;transform:scaleY(1.0954);transform-origin:0 8.83px;color:#000;">BRM5032 Work Experience and replace with L5 compulsory BRM 5007 Work Experience (20 credits)</div>
<div class="a t" style="left:567.5px;top:263.41px;font-family:'Liberation Serif';font-weight:normal;font-size:10.74px;transform:scaleY(1.0758);transform-origin:0 8.99px;color:#000;">MsC. Thục Anh</div>
<div class="a t" style="left:59.5px;top:321.2px;font-family:'Liberation Serif';font-weight:bold;font-size:10.87px;transform:scaleY(1.0626);transform-origin:0 9.10px;color:#000;text-decoration:underline;text-underline-offset:1.5px;">Module Level Modification</div>
<div class="a t" style="left:59.7px;top:349.75px;font-family:'Liberation Serif';font-weight:bold;font-size:11.87px;transform:scaleY(0.9726);transform-origin:0 9.95px;color:#000;">Level</div>
<div class="a t" style="left:125.7px;top:350.82px;font-family:'Liberation Serif';font-weight:bold;font-size:10.72px;transform:scaleY(1.0771);transform-origin:0 8.98px;color:#000;">Module Modification</div>
<div class="a t" style="left:568.3px;top:350.07px;font-family:'Liberation Serif';font-weight:bold;font-size:10.91px;transform:scaleY(1.0589);transform-origin:0 9.13px;color:#000;">Module Leader</div>
<div class="a t" style="left:131px;top:365.71px;font-family:'Liberation Serif';font-weight:normal;font-size:10.38px;transform:scaleY(1.1132);transform-origin:0 8.69px;color:#000;">BAC5006 Financial Management  - There was a modification to change this to EXAM1 100</div>
<div class="a t" style="left:568.3px;top:365.25px;font-family:'Liberation Serif';font-weight:normal;font-size:10.45px;transform:scaleY(1.1052);transform-origin:0 8.75px;color:#000;">Assoc. Prof. Pham Duc Cuong</div>
<div class="a t" style="left:87.5px;top:375.74px;font-family:'Liberation Serif';font-weight:normal;font-size:14.40px;transform:scaleY(0.8021);transform-origin:0 12.06px;color:#000;">5</div>
<div class="a t" style="left:131px;top:386.62px;font-family:'Liberation Serif';font-weight:normal;font-size:10.36px;transform:scaleY(1.1148);transform-origin:0 8.68px;color:#000;">BAC5014 Investment Market and Principles - There was a modification to change this to WRIT1 100 .</div>
<div class="a t" style="left:568.3px;top:393.62px;font-family:'Liberation Serif';font-weight:normal;font-size:10.61px;transform:scaleY(1.0889);transform-origin:0 8.88px;color:#000;">MsC. Nguyen Ngoc Tram</div>
<div class="a t" style="left:125.5px;top:408.89px;font-family:'Liberation Serif';font-weight:normal;font-size:10.52px;transform:scaleY(1.0981);transform-origin:0 8.81px;color:#000;">Change of assessment pattern from CTEST1 40% EXAM1 60%</div>
<div class="a t" style="left:125.5px;top:423.12px;font-family:'Liberation Serif';font-weight:normal;font-size:10.60px;transform:scaleY(1.0897);transform-origin:0 8.88px;color:#000;">to WRIT1 20% EXAM 1 80%.</div>
<div class="a t" style="left:125.5px;top:437.66px;font-family:'Liberation Serif';font-weight:normal;font-size:10.31px;transform:scaleY(1.1199);transform-origin:0 8.64px;color:#000;">Change of L&amp;T Delivery methods (removal of 1 hour weekly workshop).  Updated reading list</div>
<div class="a t" style="left:568.3px;top:422.89px;font-family:'Liberation Serif';font-weight:normal;font-size:10.29px;transform:scaleY(1.1229);transform-origin:0 8.61px;color:#000;">Assoc. Prof. Nguyen Thanh Hieu/</div>
<div class="a t" style="left:570.3px;top:436.62px;font-family:'Liberation Serif';font-weight:normal;font-size:10.49px;transform:scaleY(1.1014);transform-origin:0 8.78px;color:#000;">MsC. Nguyen Phuong Thao</div>
<div class="a t" style="left:87.5px;top:433.44px;font-family:'Liberation Serif';font-weight:normal;font-size:14.40px;transform:scaleY(0.8021);transform-origin:0 12.06px;color:#000;">4</div>
<div class="a t" style="left:125.3px;top:451.41px;font-family:'Liberation Serif';font-weight:normal;font-size:10.37px;transform:scaleY(1.1133);transform-origin:0 8.69px;color:#000;">BAC 4022 Global Financial Services - Change the assessment pattern from</div>
<div class="a t" style="left:129.1px;top:465.45px;font-family:'Liberation Serif';font-weight:normal;font-size:10.69px;transform:scaleY(1.0803);transform-origin:0 8.95px;color:#000;">WRIT1 50% EXAM1 50% to WRIT1 25% WRIT2 75%</div>
<div class="a t" style="left:568.3px;top:465.71px;font-family:'Liberation Serif';font-weight:normal;font-size:10.50px;transform:scaleY(1.0999);transform-origin:0 8.79px;color:#000;">MsC. Ngô Thanh Xuan</div>
<div class="a" style="left:905px;top:203px;width:11px;height:388px;background:#eceef2;border-left:1px solid #d4d7dd"></div>
<div class="a" style="left:906px;top:204px;width:10px;height:7px;background:linear-gradient(#fdfdfe,#dfe2e7);border:1px solid #a9aeb6"></div>
<svg class="a" style="left:907px;top:213px;" width="8" height="5" viewBox="0 0 8 5"><path d="M1 4.5 L4 1 L7 4.5z" fill="#555"/></svg>
<div class="a" style="left:906px;top:221px;width:9.5px;height:321px;background:linear-gradient(90deg,#f3f4f6,#e6e8ec);border:1px solid #b5bac2;border-radius:2px"></div>
<div class="a" style="left:908px;top:380px;width:5px;height:1px;background:#8a8f98"></div>
<div class="a" style="left:908px;top:382px;width:5px;height:1px;background:#8a8f98"></div>
<svg class="a" style="left:907px;top:581px;" width="8" height="5" viewBox="0 0 8 5"><path d="M1 0.5 L4 4 L7 0.5z" fill="#555"/></svg>
<div class="a" style="left:40px;top:591px;width:877px;height:11.5px;background:linear-gradient(#eef0f4,#dfe2e8)"></div>
<div class="a" style="left:40px;top:591px;width:877px;height:1px;background:#a9aeb7"></div>
<svg class="a" style="left:44px;top:593px;" width="40" height="8" viewBox="0 0 40 8"><path d="M3 1V7 M8 1L5 4L8 7z M15 1L12 4L15 7z M25 1L28 4L25 7z M32 1L35 4L32 7z M37 1V7" stroke="#444" fill="#444" stroke-width="0.8"/></svg>
<svg class="a" style="left:84px;top:591px;" width="150" height="12" viewBox="0 0 150 12"><path d="M4 0.5 L8 11.5 H37 L41 0.5z" fill="#fff" stroke="#9aa0a9" stroke-width="0.8"/><path d="M44 0.5 L48 11.5 H82 L86 0.5" fill="none" stroke="#9aa0a9" stroke-width="0.8"/><path d="M86 0.5 L90 11.5 H125 L129 0.5" fill="none" stroke="#9aa0a9" stroke-width="0.8"/><path d="M129 0.5 L133 11.5 H143 L147 0.5" fill="none" stroke="#9aa0a9" stroke-width="0.8"/></svg>
<div class="a t" style="left:89.5px;top:593.39px;font-family:'Liberation Sans';font-weight:bold;font-size:9.00px;color:#333">Sheet1</div>
<div class="a t" style="left:132px;top:593.79px;font-family:'Liberation Sans';font-weight:normal;font-size:8.52px;color:#555">Sheet2</div>
<div class="a t" style="left:173px;top:593.79px;font-family:'Liberation Sans';font-weight:normal;font-size:8.52px;color:#555">Sheet3</div>
<svg class="a" style="left:214px;top:593px;" width="11" height="9" viewBox="0 0 11 9"><rect x="2" y="2" width="8" height="6" fill="#dfe8f7" stroke="#4a78c8" stroke-width="0.8"/><circle cx="2.5" cy="2.5" r="2" fill="#f4b942"/></svg>
<div class="a" style="left:559px;top:591px;width:346px;height:11.5px;background:#eceef2"></div>
<div class="a" style="left:559.5px;top:592.5px;width:5px;height:9px;background:#fff;border:1px solid #9aa0a9"></div>
<svg class="a" style="left:567px;top:593px;" width="5" height="8" viewBox="0 0 5 8"><path d="M4.5 1 L1 4 L4.5 7z" fill="#555"/></svg>
<div class="a" style="left:576px;top:592.5px;width:272px;height:9px;background:linear-gradient(#f5f6f8,#e3e6eb);border:1px solid #b5bac2;border-radius:2px"></div>
<div class="a" style="left:711px;top:595px;width:1px;height:4px;background:#777"></div>
<div class="a" style="left:713px;top:595px;width:1px;height:4px;background:#777"></div>
<svg class="a" style="left:891px;top:593px;" width="5" height="8" viewBox="0 0 5 8"><path d="M0.5 1 L4 4 L0.5 7z" fill="#555"/></svg>
<div class="a" style="left:900px;top:592.5px;width:5px;height:9px;background:#fff;border:1px solid #9aa0a9"></div>
<div class="a" style="left:40px;top:602.5px;width:877px;height:15.5px;background:linear-gradient(#e9ebef,#d5d8de)"></div>
<div class="a t" style="left:45.7px;top:608.06px;font-family:'Liberation Sans';font-weight:normal;font-size:7.02px;color:#444">Ready</div>
<div class="a" style="left:73px;top:603px;width:1px;height:15px;background:#bfc3ca"></div>
<div class="a" style="left:753px;top:604px;width:14px;height:12px;background:linear-gradient(#fde7a4,#f8cd5a);border:1px solid #d9ac40"></div>
<svg class="a" style="left:756px;top:606px;" width="9" height="8" viewBox="0 0 9 8"><path d="M0.5 0.5H8.5V7.5H0.5z M0.5 2.5H8.5 M0.5 4.5H8.5 M3.5 0.5V7.5 M6 0.5V7.5" fill="none" stroke="#555" stroke-width="0.7"/></svg>
<svg class="a" style="left:772px;top:605px;" width="10" height="10" viewBox="0 0 10 10"><rect x="0.5" y="0.5" width="9" height="9" fill="#f2f3f6" stroke="#666"/><rect x="2.5" y="2.5" width="5" height="5" fill="none" stroke="#666"/></svg>
<svg class="a" style="left:783px;top:605px;" width="10" height="10" viewBox="0 0 10 10"><rect x="0.5" y="0.5" width="9" height="9" fill="#f2f3f6" stroke="#666"/><path d="M5 0.5V9.5M0.5 5H9.5" stroke="#666"/></svg>
<div class="a t" style="left:799px;top:607.54px;font-family:'Liberation Sans';font-weight:normal;font-size:7.04px;color:#444">100%</div>
<svg class="a" style="left:822px;top:604px;" width="12" height="12" viewBox="0 0 12 12"><circle cx="6" cy="6" r="5" fill="#f6f7f9" stroke="#666"/><path d="M3 6H9" stroke="#444" stroke-width="1.2"/></svg>
<div class="a" style="left:834px;top:609.5px;width:68px;height:1px;background:#9ea3ab"></div>
<svg class="a" style="left:864px;top:605px;" width="8" height="9" viewBox="0 0 8 9"><path d="M0.5 0.5H7.5V5.5L4 8.5L0.5 5.5z" fill="#f4f5f7" stroke="#777"/></svg>
<svg class="a" style="left:901px;top:604px;" width="12" height="12" viewBox="0 0 12 12"><circle cx="6" cy="6" r="5" fill="#f6f7f9" stroke="#666"/><path d="M3 6H9M6 3V9" stroke="#444" stroke-width="1.2"/></svg>
<svg class="a" style="left:725px;top:533px;" width="12" height="12" viewBox="0 0 12 12"><path d="M4 1H8V4H11V8H8V11H4V8H1V4H4z" fill="#fff" stroke="#000" stroke-width="1.3"/></svg>
<div class="a" style="left:916px;top:91px;width:61px;height:527px;background:#d9dbe6"></div>
<div class="a" style="left:916px;top:91px;width:1px;height:527px;background:#c9ccd8"></div>
<svg class="a" style="left:940px;top:99px;" width="12" height="11" viewBox="0 0 12 11"><path d="M0 1.5 L5 0.8 V5 H0z M6 0.6 L12 0 V5 H6z M0 6 H5 V10.2 L0 9.5z M6 6 H12 V11 L6 10.4z" fill="#111"/></svg>
<svg class="a" style="left:939px;top:124px;" width="13" height="14" viewBox="0 0 13 14"><circle cx="8.5" cy="5.5" r="3.8" fill="none" stroke="#222" stroke-width="1.2"/><path d="M5.8 8.2 L1.5 12.8" stroke="#222" stroke-width="1.3"/></svg>
<svg class="a" style="left:940px;top:153px;" width="12" height="12" viewBox="0 0 12 12"><circle cx="6" cy="6" r="4.6" fill="none" stroke="#111" stroke-width="1.5"/></svg>
<svg class="a" style="left:940px;top:181px;" width="13" height="12" viewBox="0 0 13 12"><path d="M1 1.5H9 M1 10.5H9 M2.5 3.5V8.5 M7.5 3.5V8.5 M2.5 3.5H7.5 M2.5 8.5H7.5 M11.5 0V11" stroke="#222" stroke-width="1.2" fill="none"/><path d="M10 3H13 M10 7H13" stroke="#222" stroke-width="1"/></svg>
<svg class="a" style="left:938px;top:210px;" width="16" height="16" viewBox="0 0 16 16"><circle cx="8" cy="8" r="7.5" fill="#db4437"/><path d="M8 8 L1.5 11.75 A7.5 7.5 0 0 0 11.75 14.5z" fill="#0f9d58"/><path d="M8 8 L11.75 14.5 A7.5 7.5 0 0 0 14.5 4.25 H8z" fill="#ffcd40"/><circle cx="8" cy="8" r="3.6" fill="#fff"/><circle cx="8" cy="8" r="2.7" fill="#4285f4"/></svg>
<svg class="a" style="left:938px;top:243px;" width="16" height="16" viewBox="0 0 16 16"><circle cx="8" cy="8" r="7.5" fill="#1e7bd6"/><path d="M2 6 A6.5 6.5 0 0 1 15.5 8 c0 2-2 2.5-4 2.5 h-4 c0.5 2 2.5 3 5 2.5 A7.5 7.5 0 0 1 1 9z" fill="#3ecf8e" opacity="0.9"/><path d="M5 9.5 c0-3 2-4.5 4-4.5 s4 1 4 3.5 h-6z" fill="#0c5cb6"/></svg>
<div class="a" style="left:917px;top:267px;width:58px;height:32px;background:#eceef5"></div>
<svg class="a" style="left:938px;top:275px;" width="16" height="15" viewBox="0 0 16 15"><rect x="4" y="0.5" width="11.5" height="14" fill="#fff" stroke="#6aaa6a" stroke-width="0.8"/><rect x="0.5" y="2" width="9" height="11" fill="#1f8a3c"/><path d="M2.5 4 L7.5 11 M7.5 4 L2.5 11" stroke="#fff" stroke-width="1.4"/><path d="M10 4H14M10 7H14M10 10H14" stroke="#8cc48c" stroke-width="0.8"/></svg>
<svg class="a" style="left:938px;top:307px;" width="16" height="14" viewBox="0 0 16 14"><path d="M0.5 2 H6 L7.5 3.5 H15.5 V13.5 H0.5z" fill="#f7c94b"/><rect x="0.5" y="6" width="15" height="7.5" fill="#ffdd6e"/><rect x="4" y="8" width="8" height="5.5" fill="#2f7bd8"/><rect x="6" y="10" width="4" height="3.5" fill="#ffdd6e"/></svg>
<svg class="a" style="left:936px;top:340px;" width="20" height="17" viewBox="0 0 20 17"><circle cx="13" cy="3.5" r="2.8" fill="#5b5fc7"/><rect x="9" y="5" width="9" height="8" rx="3" fill="#7b83eb"/><rect x="1" y="3" width="10" height="10" rx="1" fill="#4b53bc"/><text x="6" y="11" font-size="8.5" font-weight="bold" fill="#fff" text-anchor="middle" font-family="Liberation Sans">T</text><circle cx="15" cy="12.5" r="4.3" fill="#d92c2c" stroke="#fff" stroke-width="0.8"/><text x="15" y="15.3" font-size="7" font-weight="bold" fill="#fff" text-anchor="middle" font-family="Liberation Sans">2</text></svg>
<svg class="a" style="left:938px;top:370px;" width="16" height="15" viewBox="0 0 16 15"><rect x="4" y="0.5" width="11.5" height="14" fill="#fff" stroke="#7a9fd8" stroke-width="0.8"/><rect x="0.5" y="2" width="10" height="11" fill="#1f5bb8"/><text x="5.5" y="11.2" font-size="9" font-weight="bold" fill="#fff" text-anchor="middle" font-family="Liberation Sans">W</text></svg>
<div class="a" style="left:975px;top:205px;width:2px;height:26px;background:#2f74d8"></div>
<div class="a" style="left:975px;top:237px;width:2px;height:29px;background:#2f74d8"></div>
<div class="a" style="left:975px;top:267px;width:2px;height:32px;background:#2f74d8"></div>
<div class="a" style="left:975px;top:302px;width:2px;height:28px;background:#2f74d8"></div>
<div class="a" style="left:975px;top:335px;width:2px;height:27px;background:#2f74d8"></div>
<div class="a" style="left:975px;top:365px;width:2px;height:27px;background:#2f74d8"></div>
<svg class="a" style="left:922px;top:499px;" width="7" height="11" viewBox="0 0 7 11"><path d="M5.5 1 L1.5 5.5 L5.5 10" fill="none" stroke="#222" stroke-width="1.1"/></svg>
<svg class="a" style="left:940px;top:498px;" width="11" height="13" viewBox="0 0 11 13"><path d="M1 4 A4.5 4.5 0 0 1 10 4 M1 9 A4.5 4.5 0 0 0 10 9" fill="none" stroke="#333" stroke-width="0.9"/><rect x="2.5" y="4.5" width="4" height="4" fill="none" stroke="#333" stroke-width="0.9"/><path d="M7 5V8 M9 5V8" stroke="#333" stroke-width="0.9"/></svg>
<svg class="a" style="left:954px;top:499px;" width="13" height="11" viewBox="0 0 13 11"><path d="M1 4 H3 L6 1 V10 L3 7 H1z" fill="none" stroke="#333" stroke-width="0.9"/><path d="M8 3.5 A3 3 0 0 1 8 7.5 M10 2 A5 5 0 0 1 10 9" fill="none" stroke="#333" stroke-width="0.9"/></svg>
<div class="a t" style="left:886.5px;width:120px;text-align:center;top:521.22px;font-family:'Liberation Sans';font-size:8.6px;font-weight:normal;color:#222;">ENG</div>
<div class="a t" style="left:886.5px;width:120px;text-align:center;top:546.79px;font-family:'Liberation Sans';font-size:8.4px;font-weight:normal;color:#222;">3:58 PM</div>
<div class="a t" style="left:886.5px;width:120px;text-align:center;top:558.59px;font-family:'Liberation Sans';font-size:8.4px;font-weight:normal;color:#222;">Friday</div>
<div class="a t" style="left:886.5px;width:120px;text-align:center;top:570.49px;font-family:'Liberation Sans';font-size:8.4px;font-weight:normal;color:#222;">21-May-21</div>
<svg class="a" style="left:940px;top:591px;" width="13" height="12" viewBox="0 0 13 12"><rect x="0.5" y="0.5" width="11" height="8.5" fill="#1a1a1a"/><path d="M4 9 V11.5 L6.5 9" fill="#1a1a1a"/><path d="M2.5 3H9.5M2.5 5.5H7" stroke="#ddd" stroke-width="0.8"/><circle cx="10" cy="9.5" r="2" fill="#d9dbe6" stroke="#1a1a1a" stroke-width="0.8"/></svg>
<div class="a t" style="left:1052.7px;top:126.92px;font-family:'Liberation Sans';font-weight:bold;font-size:15.81px;color:#fff">Participants</div>
<div class="a" style="left:1052px;top:170px;width:260px;height:32px;background:#292929;border-radius:3px"></div>
<div class="a t" style="left:1063.6px;top:179.09px;font-family:'Liberation Sans';font-weight:normal;font-size:14.07px;color:#c8c8c8">Invite someone or dial a number</div>
<div class="a" style="left:1052px;top:212px;width:260px;height:32px;border:1px solid #4a4a4a;border-radius:3px;background:#262626"></div>
<svg class="a" style="left:1142px;top:219px;" width="16" height="17" viewBox="0 0 16 17"><circle cx="12.5" cy="3.5" r="2.4" fill="none" stroke="#fff" stroke-width="1.2"/><circle cx="3.5" cy="8.5" r="2.4" fill="none" stroke="#fff" stroke-width="1.2"/><circle cx="12.5" cy="13.5" r="2.4" fill="none" stroke="#fff" stroke-width="1.2"/><path d="M5.6 7.3 L10.4 4.7 M5.6 9.7 L10.4 12.3" stroke="#fff" stroke-width="1.2"/></svg>
<div class="a t" style="left:1167.6px;top:222.38px;font-family:'Liberation Sans';font-weight:bold;font-size:13.14px;color:#fff">Share invite</div>
<svg class="a" style="left:1039px;top:283px;" width="8" height="6" viewBox="0 0 8 6"><path d="M0.5 0.5 H7.5 L4 5z" fill="#bbb"/></svg>
<div class="a t" style="left:1052.5px;top:281.61px;font-family:'Liberation Sans';font-weight:normal;font-size:12.03px;color:#e8e8e8">In this meeting (20)</div>
<div class="a" style="left:1252px;top:274.5px;width:60px;height:23px;border:1px solid #5a5a5a;border-radius:3px;background:#262626"></div>
<div class="a t" style="left:1265.7px;top:280.59px;font-family:'Liberation Sans';font-weight:bold;font-size:12.89px;color:#fff">Mute all</div>
<div class="a" style="left:1053px;top:310px;width:32px;height:32px;border-radius:50%;background:radial-gradient(ellipse at 35% 75%,#2a2018 0,#4a3a2e 30%,transparent 55%),linear-gradient(100deg,#5a4a3a 0%,#8a7a6a 30%,#dfe4e6 45%,#f0f2f4 70%,#b8c0c4 100%)"></div>
<div class="a" style="left:1073.5px;top:330.3px;width:13px;height:13px;border-radius:50%;background:#c4314b;border:2px solid #1f1f1f"></div>
<div class="a t" style="left:1093.5px;top:319.84px;font-family:'Liberation Sans';font-weight:normal;font-size:13.77px;color:#fff">Truong Van Tu. Ke Toan</div>
<svg class="a" style="left:1296px;top:317px;" width="14" height="18" viewBox="0 0 14 18"><path d="M2 1.5 L10 9.5" stroke="#e8e8e8" stroke-width="1.2"/><rect x="6.2" y="1.5" width="5.5" height="9" rx="2.75" fill="none" stroke="#e8e8e8" stroke-width="1.2"/><path d="M4.6 8 a4.5 4.5 0 0 0 4.5 4.8" fill="none" stroke="#e8e8e8" stroke-width="1.2"/></svg>
<div class="a" style="left:1053px;top:360px;width:32px;height:32px;border-radius:50%;background:#dcefef"></div>
<div class="a t" style="left:1053px;top:369.97px;width:32px;text-align:center;font-size:12.2px;color:#3f8586;-webkit-text-stroke:0.25px #3f8586">BH</div>
<div class="a" style="left:1073.5px;top:380.3px;width:13px;height:13px;border-radius:50%;background:#c4314b;border:2px solid #1f1f1f"></div>
<div class="a t" style="left:1093.5px;top:369.98px;font-family:'Liberation Sans';font-weight:normal;font-size:13.61px;color:#fff">Bach Thi Hong Ha</div>
<svg class="a" style="left:1296px;top:367px;" width="14" height="18" viewBox="0 0 14 18"><path d="M2 1.5 L10 9.5" stroke="#e8e8e8" stroke-width="1.2"/><rect x="6.2" y="1.5" width="5.5" height="9" rx="2.75" fill="none" stroke="#e8e8e8" stroke-width="1.2"/><path d="M4.6 8 a4.5 4.5 0 0 0 4.5 4.8" fill="none" stroke="#e8e8e8" stroke-width="1.2"/></svg>
<div class="a" style="left:1053px;top:410px;width:32px;height:32px;border-radius:50%;background:radial-gradient(circle at 50% 45%,#7a6a60 0,#e8eaec 30%,#c8ced6 70%,#8a96a8 100%)"></div>
<div class="a" style="left:1073.5px;top:430.3px;width:13px;height:13px;border-radius:50%;background:#c4314b;border:2px solid #1f1f1f"></div>
<div class="a t" style="left:1093.5px;top:419.69px;font-family:'Liberation Sans';font-weight:normal;font-size:13.96px;color:#fff">Bui Minh Duc</div>
<svg class="a" style="left:1296px;top:417px;" width="14" height="18" viewBox="0 0 14 18"><path d="M2 1.5 L10 9.5" stroke="#e8e8e8" stroke-width="1.2"/><rect x="6.2" y="1.5" width="5.5" height="9" rx="2.75" fill="none" stroke="#e8e8e8" stroke-width="1.2"/><path d="M4.6 8 a4.5 4.5 0 0 0 4.5 4.8" fill="none" stroke="#e8e8e8" stroke-width="1.2"/></svg>
<div class="a" style="left:1049px;top:456px;width:40px;height:40px;border:2px solid #7f85f5;border-radius:50%"></div>
<div class="a" style="left:1053px;top:460px;width:32px;height:32px;border-radius:50%;background:#dfe5e8"></div>
<div class="a t" style="left:1053px;top:469.97px;width:32px;text-align:center;font-size:12.2px;color:#2d4a55;-webkit-text-stroke:0.25px #2d4a55">C</div>
<div class="a" style="left:1073.7px;top:479.8px;width:13px;height:13px;border-radius:50%;background:#fff;border:2px solid #1f1f1f"></div>
<div class="a t" style="left:1093.5px;top:470.25px;font-family:'Liberation Sans';font-weight:bold;font-size:13.29px;color:#fff">cuongpd@neu.edu.vn (Guest)</div>
<svg class="a" style="left:1296px;top:467px;" width="14" height="18" viewBox="0 0 14 18"><path d="M2 1.5 L10 9.5" stroke="#e8e8e8" stroke-width="1.2"/><rect x="6.2" y="1.5" width="5.5" height="9" rx="2.75" fill="none" stroke="#e8e8e8" stroke-width="1.2"/><path d="M4.6 8 a4.5 4.5 0 0 0 4.5 4.8" fill="none" stroke="#e8e8e8" stroke-width="1.2"/></svg>
<div class="a" style="left:1053px;top:510px;width:32px;height:32px;border-radius:50%;background:#dddcef"></div>
<div class="a t" style="left:1053px;top:519.97px;width:32px;text-align:center;font-size:12.2px;color:#3b3a7a;-webkit-text-stroke:0.25px #3b3a7a">DH</div>
<div class="a" style="left:1073.5px;top:530.3px;width:13px;height:13px;border-radius:50%;background:#c4314b;border:2px solid #1f1f1f"></div>
<div class="a t" style="left:1093.5px;top:519.82px;font-family:'Liberation Sans';font-weight:normal;font-size:13.80px;color:#fff">Do Thi Hien</div>
<svg class="a" style="left:1296px;top:517px;" width="14" height="18" viewBox="0 0 14 18"><path d="M2 1.5 L10 9.5" stroke="#e8e8e8" stroke-width="1.2"/><rect x="6.2" y="1.5" width="5.5" height="9" rx="2.75" fill="none" stroke="#e8e8e8" stroke-width="1.2"/><path d="M4.6 8 a4.5 4.5 0 0 0 4.5 4.8" fill="none" stroke="#e8e8e8" stroke-width="1.2"/></svg>
<div class="a" style="left:1053px;top:560px;width:32px;height:32px;border-radius:50%;background:radial-gradient(ellipse at 50% 40%,#e8c0a8 0,#d8b098 14%,transparent 22%),radial-gradient(ellipse at 50% 95%,#c82a2a 0,#c02a2a 35%,transparent 50%),linear-gradient(90deg,#6a8a6a 0%,#b8c4c0 30%,#e8ecee 60%,#f4f4f4 100%)"></div>
<div class="a" style="left:1073.5px;top:580.3px;width:13px;height:13px;border-radius:50%;background:#c4314b;border:2px solid #1f1f1f"></div>
<div class="a t" style="left:1093.5px;top:569.96px;font-family:'Liberation Sans';font-weight:normal;font-size:13.64px;color:#fff">Doan Thanh. Nga</div>
<svg class="a" style="left:1296px;top:567px;" width="14" height="18" viewBox="0 0 14 18"><path d="M2 1.5 L10 9.5" stroke="#e8e8e8" stroke-width="1.2"/><rect x="6.2" y="1.5" width="5.5" height="9" rx="2.75" fill="none" stroke="#e8e8e8" stroke-width="1.2"/><path d="M4.6 8 a4.5 4.5 0 0 0 4.5 4.8" fill="none" stroke="#e8e8e8" stroke-width="1.2"/></svg>
<div class="a" style="left:1053px;top:610px;width:32px;height:32px;border-radius:50%;background:#fbedcd"></div>
<div class="a t" style="left:1053px;top:619.97px;width:32px;text-align:center;font-size:12.2px;color:#876417;-webkit-text-stroke:0.25px #876417">DH</div>
<div class="a" style="left:1073.5px;top:630.3px;width:13px;height:13px;border-radius:50%;background:#c4314b;border:2px solid #1f1f1f"></div>
<div class="a t" style="left:1093.5px;top:619.73px;font-family:'Liberation Sans';font-weight:normal;font-size:13.91px;color:#fff">Duong Thanh Hien</div>
<svg class="a" style="left:1296px;top:617px;" width="14" height="18" viewBox="0 0 14 18"><path d="M2 1.5 L10 9.5" stroke="#e8e8e8" stroke-width="1.2"/><rect x="6.2" y="1.5" width="5.5" height="9" rx="2.75" fill="none" stroke="#e8e8e8" stroke-width="1.2"/><path d="M4.6 8 a4.5 4.5 0 0 0 4.5 4.8" fill="none" stroke="#e8e8e8" stroke-width="1.2"/></svg>
<div class="a" style="left:1049px;top:656px;width:40px;height:40px;border:2px solid #7f85f5;border-radius:50%"></div>
<div class="a" style="left:1053px;top:660px;width:32px;height:32px;border-radius:50%;background:radial-gradient(circle at 50% 40%,#f0c8b0 0,#d8a890 25%,#b02a2a 60%,#c43a3a 100%)"></div>
<div class="a" style="left:1073.7px;top:679.8px;width:13px;height:13px;border-radius:50%;background:#c4314b;border:2px solid #1f1f1f"></div>
<div class="a t" style="left:1093.5px;top:663.05px;font-family:'Liberation Sans';font-weight:bold;font-size:13.65px;color:#fff">Ha Hong Hanh</div>
<div class="a t" style="left:1093.5px;top:679.27px;font-family:'Liberation Sans';font-weight:normal;font-size:11.73px;color:#a8a8a8">Organizer</div>
<svg class="a" style="left:1296px;top:667px;" width="14" height="18" viewBox="0 0 14 18"><path d="M2 1.5 L10 9.5" stroke="#e8e8e8" stroke-width="1.2"/><rect x="6.2" y="1.5" width="5.5" height="9" rx="2.75" fill="none" stroke="#e8e8e8" stroke-width="1.2"/><path d="M4.6 8 a4.5 4.5 0 0 0 4.5 4.8" fill="none" stroke="#e8e8e8" stroke-width="1.2"/></svg>
<div class="a" style="left:80px;top:647px;width:42px;height:42px;border-radius:50%;background:#6264a7"></div>
<div class="a t" style="left:89.75px;top:662.77px;font-family:'Liberation Sans';font-weight:bold;font-size:14.44px;color:#fff">+14</div>
<div class="a" style="left:163px;top:646px;width:44px;height:44px;border-radius:50%;background:#fbe8d5"></div>
<div class="a t" style="left:176.75px;top:662.83px;font-family:'Liberation Sans';font-weight:bold;font-size:14.38px;transform:scaleY(1.1475);transform-origin:0 12.17px;color:#8a5a28">LT</div>
<div class="a" style="left:247px;top:646px;width:44px;height:44px;border-radius:50%;background:#dde2d8"></div>
<div class="a t" style="left:259.25px;top:661.89px;font-family:'Liberation Sans';font-weight:bold;font-size:15.49px;transform:scaleY(1.0652);transform-origin:0 13.11px;color:#4a5a30">TA</div>
<div class="a" style="left:311px;top:621px;width:180px;height:89px;background:#0a2f5e;overflow:hidden"><div class="a" style="left:51px;top:14px;width:17px;height:22px;border-radius:50% 50% 40% 40%;background:radial-gradient(#f4f6fa 35%,#9fb0c8 70%,transparent 72%)"></div><div class="a" style="left:105px;top:47px;width:20px;height:3px;background:#c9d3e3;opacity:.75"></div><div class="a" style="left:105px;top:53px;width:24px;height:3px;background:#c9d3e3;opacity:.75"></div><div class="a" style="left:105px;top:59px;width:18px;height:3px;background:#c9d3e3;opacity:.75"></div><div class="a" style="left:98px;top:68px;width:38px;height:40px;border-radius:50% 45% 0 0;background:#d2ced0"></div><div class="a" style="left:52px;top:20px;width:58px;height:95px;border-radius:50% 50% 25% 25%;background:linear-gradient(#a85a3a,#8a4a34)"></div><div class="a" style="left:60px;top:30px;width:42px;height:62px;border-radius:45% 45% 40% 40%;background:radial-gradient(ellipse at 50% 40%,#c89888 0,#a87068 60%,#8a5a50 100%)"></div><div class="a" style="left:62px;top:52px;width:36px;height:5px;background:#3a2a48;opacity:.4;border-radius:3px"></div></div>
<div class="a t" style="left:326px;top:698.91px;font-family:'Liberation Sans';font-weight:bold;font-size:10.86px;color:#fff">Shaaban, Ingy</div>
<svg class="a" style="left:409px;top:696px;" width="14" height="14" viewBox="0 0 14 14"><rect x="4.5" y="0.5" width="5" height="8" rx="2.5" fill="#fff" stroke="#fff"/><path d="M2.5 6 a4.5 4.5 0 0 0 9 0 M7 11V13.5" fill="none" stroke="#fff" stroke-width="1.2"/><path d="M1 0.5 L13 13" stroke="#fff" stroke-width="1.2"/></svg>
<div class="a" style="left:491px;top:621px;width:180px;height:89px;background:linear-gradient(90deg,#dcd2c6 0%,#e6ddd2 50%,#e8e0d6 85%,#c8beb4 100%);overflow:hidden"><div class="a" style="left:54px;top:39px;width:5px;height:50px;background:#1a1a1a"></div><div class="a" style="left:153px;top:0px;width:27px;height:89px;background:linear-gradient(90deg,#2a2622 0,#2a2622 22%,#e8e8e8 30%,#f4f4f2 50%,#9a8a78 62%,#d8d8d4 75%,#6a6a5a 100%)"></div><div class="a" style="left:150px;top:58px;width:30px;height:31px;background:radial-gradient(#5a6a4a,#3a4a32 55%,transparent 72%)"></div><div class="a" style="left:56px;top:-12px;width:92px;height:115px;border-radius:40% 40% 12% 12%;background:linear-gradient(#2a2c42,#34304a 50%,#4a3a4c)"></div><div class="a" style="left:118px;top:50px;width:45px;height:45px;border-radius:45% 45% 0 0;background:#c9a3a3"></div><div class="a" style="left:84px;top:62px;width:40px;height:30px;border-radius:30% 30% 0 0;background:#d4aea6"></div><div class="a" style="left:72px;top:-14px;width:58px;height:80px;border-radius:42% 42% 48% 48%;background:radial-gradient(ellipse at 50% 45%,#eed6c8 0,#dfbfae 60%,#c8a292 100%)"></div><div class="a" style="left:72px;top:17px;width:26px;height:26px;border-radius:50%;border:1.6px solid #b8b4b4"></div><div class="a" style="left:105px;top:17px;width:26px;height:26px;border-radius:50%;border:1.6px solid #b8b4b4"></div><div class="a" style="left:89px;top:50px;width:20px;height:8px;border-radius:50%;background:#c84a4a"></div></div>
<div class="a t" style="left:506.8px;top:698.01px;font-family:'Liberation Sans';font-weight:bold;font-size:11.21px;color:#fff">Ha Hong Hanh</div>
<div class="a" style="left:594.8px;top:702px;width:2.4px;height:2.4px;background:#fff;border-radius:50%"></div>
<div class="a" style="left:600.3px;top:702px;width:2.4px;height:2.4px;background:#fff;border-radius:50%"></div>
<div class="a" style="left:605.8px;top:702px;width:2.4px;height:2.4px;background:#fff;border-radius:50%"></div>
<div class="a" style="left:671px;top:621px;width:180px;height:89px;background:radial-gradient(ellipse at 50% 45%,#4e4e70 0%,#3c3c58 55%,#2e2e44 100%)"></div>
<div class="a" style="left:730px;top:637px;width:61px;height:61px;border:4px solid #8b8ff8;border-radius:50%"></div>
<div class="a" style="left:738.5px;top:645.5px;width:44px;height:44px;border-radius:50%;background:#dde4e8"></div>
<div class="a t" style="left:700.8px;width:120px;text-align:center;top:661.73px;font-family:'Liberation Sans';font-size:16.5px;font-weight:normal;color:#1b454d;-webkit-text-stroke:0.3px #1b454d">C</div>
<div class="a t" style="left:686px;top:699.12px;font-family:'Liberation Sans';font-weight:bold;font-size:11.08px;color:#fff">cuongpd@neu.edu.vn (Gu...</div>
<div class="a" style="left:919px;top:646px;width:44px;height:44px;border-radius:50%;background:radial-gradient(ellipse at 45% 72%,#2a2420 0,#4a3e34 22%,transparent 40%),linear-gradient(#6a8a4a 0%,#9ab07a 18%,#e0e4e6 35%,#d8dadc 55%,#a09080 75%,#6a5a48 100%)"></div>
<div class="a" style="left:-4px;top:586px;width:93px;height:23.5px;background:rgba(0,0,0,.5);border-radius:4px"></div>
<div class="a t" style="left:4.6px;top:593.94px;font-family:'Liberation Sans';font-weight:bold;font-size:11.29px;transform:scaleY(1.1688);transform-origin:0 9.56px;color:#fff">Ha Hong Hanh</div>
</body></html>
